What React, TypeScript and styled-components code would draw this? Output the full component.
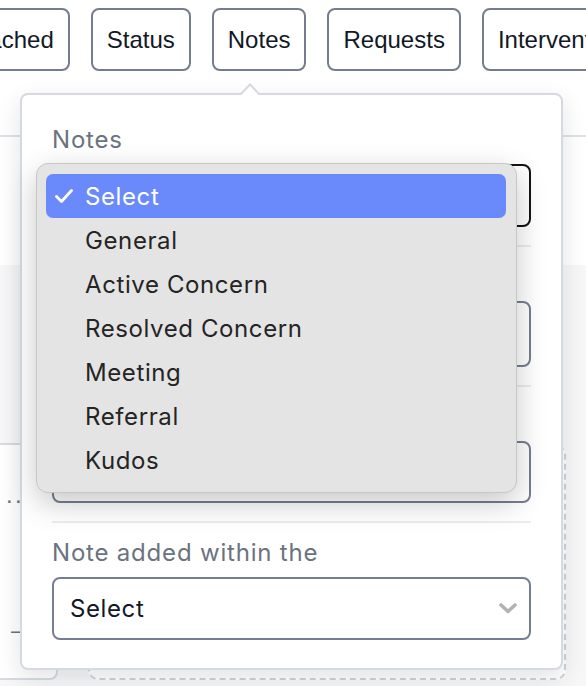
import React from 'react';
import styled, { createGlobalStyle } from 'styled-components';

const GlobalStyle = createGlobalStyle`
  html, body {
    margin: 0;
    padding: 0;
    background: #ffffff;
  }
  body {
    font-family: Inter, "Liberation Sans", sans-serif;
  }
`;

const Page = styled.div`
  position: relative;
  width: 586px;
  height: 686px;
  overflow: hidden;
`;

const Header = styled.header`
  height: 135px;
  border-bottom: 2px solid #dfe2e6;
  overflow: hidden;
`;

const TabStrip = styled.nav`
  display: flex;
  gap: 21px;
  padding-top: 8px;
  margin-left: -57px;
`;

const Tab = styled.div`
  flex-shrink: 0;
  box-sizing: border-box;
  height: 63px;
  padding: 0 14px;
  display: flex;
  align-items: center;
  border: 2px solid #747c8f;
  border-radius: 8px;
  font-family: "Liberation Sans", Arial, sans-serif;
  font-size: 24px;
  color: #111827;
  white-space: nowrap;
`;

const Toolbar = styled.div`
  height: 128px;
  background: #ffffff;
`;

const Main = styled.main`
  height: 421px;
  background: #f7f7f8;
  padding-top: 178px;
  box-sizing: border-box;
  display: flex;
  gap: 30px;
  align-items: flex-start;
`;

const SideCard = styled.div`
  flex-shrink: 0;
  box-sizing: border-box;
  width: 100px;
  height: 237px;
  margin-left: -42px;
  padding: 36px 0 0 46px;
  background: #ffffff;
  border: 2px solid #d7dbe0;
  border-radius: 8px;
  display: flex;
  flex-direction: column;
  gap: 107px;
`;

const CardText = styled.span<{ $indent?: number }>`
  margin-left: ${(p) => p.$indent ?? 0}px;
  font-family: "Liberation Sans", Arial, sans-serif;
  font-size: 24px;
  line-height: 28px;
  letter-spacing: 2.3px;
  color: #6b7280;
  white-space: nowrap;
`;

const DropZone = styled.div`
  box-sizing: border-box;
  width: 478px;
  height: 235px;
  margin-top: 2px;
  border: 2px dashed #cfd3d9;
  border-radius: 10px;
  background: #ffffff;
`;

const Popover = styled.div`
  position: absolute;
  left: 20px;
  top: 93px;
  width: 543px;
  box-sizing: border-box;
  padding: 31px 30px 28px;
  background: #ffffff;
  border: 2px solid #d6d9de;
  border-radius: 8px;
  box-shadow: 0 8px 24px rgba(17, 24, 39, 0.12);
`;

const Caret = styled.svg`
  position: absolute;
  top: -12px;
  left: 218px;
`;

const Field = styled.div`
  display: flex;
  flex-direction: column;
  gap: 10px;
`;

const Label = styled.label`
  font-size: 24px;
  line-height: 28px;
  letter-spacing: 0.8px;
  color: #6b7280;
`;

const Control = styled.div<{ $focused?: boolean; $height?: number }>`
  box-sizing: border-box;
  height: ${(p) => p.$height ?? 63}px;
  padding: 0 12px 0 16px;
  display: flex;
  align-items: center;
  justify-content: space-between;
  border: 2px solid ${(p) => (p.$focused ? '#141414' : '#767e91')};
  border-radius: 8px;
  background: #ffffff;
`;

const Value = styled.span`
  font-size: 24px;
  letter-spacing: 0.6px;
  color: #111827;
`;

const Divider = styled.hr`
  margin: 18px 0 16px;
  border: 0;
  border-top: 2px solid #ebedf0;
`;

const Menu = styled.ul`
  position: absolute;
  left: 14px;
  top: 68px;
  width: 481px;
  box-sizing: border-box;
  margin: 0;
  padding: 10px 10px 10px 9px;
  list-style: none;
  background: #e4e4e4;
  border: 1px solid #c7c7c7;
  border-radius: 12px;
  box-shadow: 0 10px 30px rgba(0, 0, 0, 0.22);
`;

const MenuItem = styled.li<{ $active?: boolean }>`
  height: 44px;
  padding-left: 9px;
  display: flex;
  align-items: center;
  gap: 12px;
  border-radius: 7px;
  font-size: 24px;
  letter-spacing: 0.6px;
  color: ${(p) => (p.$active ? '#ffffff' : '#242424')};
  background: ${(p) => (p.$active ? '#6a8afc' : 'transparent')};
`;

const CheckSlot = styled.span`
  width: 18px;
  height: 14px;
  display: flex;
  align-items: center;
`;

const tabs = ['Attached', 'Status', 'Notes', 'Requests', 'Interventions'];

const noteTypes = [
  'Select',
  'General',
  'Active Concern',
  'Resolved Concern',
  'Meeting',
  'Referral',
  'Kudos',
];

const Chevron = () => (
  <svg width="18" height="11" viewBox="0 0 18 11">
    <polyline
      points="2,2 9,8.5 16,2"
      fill="none"
      stroke="#b3b3b3"
      strokeWidth="3.6"
      strokeLinecap="round"
      strokeLinejoin="round"
    />
  </svg>
);

const Check = () => (
  <svg width="18" height="14" viewBox="0 0 18 14">
    <polyline
      points="1.5,7.5 6.5,12.5 16.5,1.5"
      fill="none"
      stroke="#ffffff"
      strokeWidth="2.8"
      strokeLinecap="round"
      strokeLinejoin="round"
    />
  </svg>
);

const App: React.FC = () => (
  <Page>
    <GlobalStyle />
    <Header>
      <TabStrip>
        {tabs.map((t) => (
          <Tab key={t}>{t}</Tab>
        ))}
      </TabStrip>
    </Header>
    <Toolbar />
    <Main>
      <SideCard>
        <CardText>...</CardText>
        <CardText $indent={5}>–</CardText>
      </SideCard>
      <DropZone />
    </Main>

    <Popover>
      <Caret width="20" height="12" viewBox="0 0 20 12">
        <path d="M0 12 L10 1.5 L20 12" fill="#ffffff" stroke="#d6d9de" strokeWidth="2" />
      </Caret>

      <Field>
        <Label>Notes</Label>
        <Control $focused>
          <Value>Select</Value>
          <Chevron />
        </Control>
      </Field>
      <Divider />
      <Field>
        <Label>Created by</Label>
        <Control $height={66} />
      </Field>
      <Divider />
      <Field>
        <Label>Contains text</Label>
        <Control $height={62} />
      </Field>
      <Divider />
      <Field>
        <Label>Note added within the</Label>
        <Control>
          <Value>Select</Value>
          <Chevron />
        </Control>
      </Field>

      <Menu>
        {noteTypes.map((n, i) => (
          <MenuItem key={n} $active={i === 0}>
            <CheckSlot>{i === 0 && <Check />}</CheckSlot>
            {n}
          </MenuItem>
        ))}
      </Menu>
    </Popover>
  </Page>
);

export default App;
